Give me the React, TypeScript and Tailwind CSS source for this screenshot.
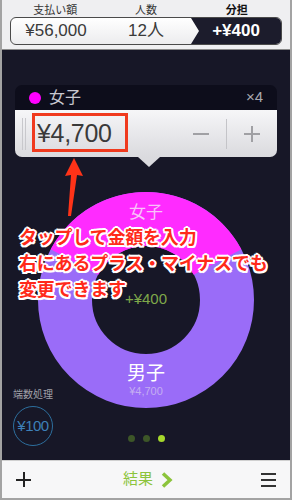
import React from "react";

const jp = { fontFamily: '"Liberation Sans", "Noto Sans CJK JP", sans-serif' };

export default function App() {
  return (
    <div
      className="relative w-[292px] h-[500px] flex flex-col overflow-hidden border-x-2 border-b-2 border-[#a3a3a3] bg-[#171727]"
      style={jp}
    >
      {/* header */}
      <div className="h-[50px] bg-[#efeff1] px-[8px] pt-[3px] border-b border-[#8a8a8a] flex flex-col">
        <div className="grid grid-cols-3 h-[14px] text-[11px] leading-[14px] text-[#333]">
          <div className="text-center">支払い額</div>
          <div className="text-center">人数</div>
          <div className="text-center font-bold text-[#111]">分担</div>
        </div>
        <div className="mt-[0px] h-[28px] rounded-[6px] border border-[#4a4a4a] bg-gradient-to-b from-[#ffffff] to-[#ececee] grid grid-cols-3 overflow-hidden text-[17px] leading-[26px] text-[#3a3a3a]">
          <div className="text-center">¥56,000</div>
          <div className="text-center">12人</div>
          <div className="text-center bg-[#1c1c2c] text-white font-bold [clip-path:polygon(0_0,100%_0,100%_100%,0_100%,8px_50%)]">
            +¥400
          </div>
        </div>
      </div>

      {/* dark content */}
      <div className="relative flex-1 flex flex-col">
        {/* popup */}
        <div className="relative mx-[13px] mt-[35px]">
          <div className="h-[25px] rounded-t-[7px] bg-[#0d0d1b] flex items-center px-[14px]">
            <div className="w-[12px] h-[12px] rounded-full bg-[#ff00ff]" />
            <div className="ml-[8px] text-[16px] text-[#c8c8d0]">女子</div>
            <div className="ml-auto text-[15px] text-[#a8a8b0]">×4</div>
          </div>
          <div className="relative h-[47px] rounded-b-[7px] bg-gradient-to-b from-[#f6f6f8] to-[#dadade] flex items-center">
            <div className="ml-[7px] w-[4px] h-[32px] border-x border-[#c8c8cc]" />
            <div className="ml-[11px] text-[25px] text-[#3a3a3a] tracking-[-0.3px]">¥4,700</div>
            <div className="ml-auto flex items-center text-[#9a9a9e]">
              <div className="w-[16px] h-[2px] bg-[#a0a0a4]" />
              <div className="ml-[17px] w-px h-[30px] bg-[#c4c4c8]" />
              <div className="ml-[17px] mr-[17px] relative w-[16px] h-[16px]">
                <div className="absolute left-0 top-[7px] w-[16px] h-[2px] bg-[#a0a0a4]" />
                <div className="absolute top-0 left-[7px] w-[2px] h-[16px] bg-[#a0a0a4]" />
              </div>
            </div>
            {/* red annotation box */}
            <div className="absolute left-[17px] top-[3px] w-[96px] h-[39px] border-[3px] border-[#f03a1e]" />
          </div>
          {/* pointer */}
          <div className="absolute left-[123px] -bottom-[10px] w-0 h-0 border-x-[11px] border-x-transparent border-t-[10px] border-t-[#dadade]" />
        </div>

        {/* donut chart */}
        <div className="relative mt-[35px] h-[216px] flex justify-center">
          <svg width="216" height="216" viewBox="0 0 216 216">
            <circle cx="108" cy="108" r="81" fill="none" stroke="#9a6cf8" strokeWidth="54" />
            <path
              d="M12.64 57.30 A108 108 0 0 1 203.36 57.30 L155.68 82.65 A54 54 0 0 0 60.32 82.65 Z"
              fill="#ff2bff"
            />
          </svg>
          <div className="absolute left-0 right-0 top-[11px] text-center text-[17px] leading-[20px] text-[#f9c2f9]">女子</div>
          <div className="absolute left-0 right-0 top-[98px] text-center text-[15px] leading-[18px] text-[#7fa84a]">+¥400</div>
          <div className="absolute left-0 right-0 top-[171px] text-center text-[19px] leading-[22px] text-white">男子</div>
          <div className="absolute left-0 right-0 top-[193px] text-center text-[11px] leading-[13px] text-[#c4aef2]">¥4,700</div>
        </div>

        {/* rounding control */}
        <div className="absolute left-[11px] top-[339px] flex flex-col items-center">
          <div className="text-[10px] leading-[12px] text-[#a0a0a8]">端数処理</div>
          <div className="mt-[5px] w-[40px] h-[40px] rounded-full border border-[#2d6f9e] flex items-center justify-center text-[15px] text-[#3d80b8] tracking-[-0.5px]">
            ¥100
          </div>
        </div>

        {/* page dots */}
        <div className="mt-auto mb-[18px] flex justify-center gap-[8px]">
          <div className="w-[7px] h-[7px] rounded-full bg-[#3d5628]" />
          <div className="w-[7px] h-[7px] rounded-full bg-[#3d5628]" />
          <div className="w-[7px] h-[7px] rounded-full bg-[#a6d82c]" />
        </div>
      </div>

      {/* bottom bar */}
      <div className="h-[38px] bg-[#f7f7f8] border-t border-[#d0d0d0] flex items-center px-[14px]">
        <div className="relative w-[15px] h-[15px]">
          <div className="absolute left-0 top-[7px] w-[15px] h-[1.5px] bg-[#222]" />
          <div className="absolute top-0 left-[7px] w-[1.5px] h-[15px] bg-[#222]" />
        </div>
        <div className="flex-1 flex items-center justify-center gap-[8px] pl-[4px]">
          <span className="text-[15px] text-[#8cc43c]">結果</span>
          <svg width="12" height="16" viewBox="0 0 12 16">
            <path d="M2 1.5 L9 8 L2 14.5" fill="none" stroke="#8cc43c" strokeWidth="3.5" strokeLinejoin="miter" />
          </svg>
        </div>
        <div className="w-[15px] flex flex-col gap-[4px]">
          <div className="h-[2px] bg-[#333]" />
          <div className="h-[2px] bg-[#333]" />
          <div className="h-[2px] bg-[#333]" />
        </div>
      </div>

      {/* annotation arrow */}
      <svg className="absolute left-[58px] top-[156px]" width="30" height="64" viewBox="0 0 30 64">
        <path d="M14 2 L23 20 L17 19 L11 60 L8 60 L11 19 L5 20 Z" fill="#ff3318" />
      </svg>

      {/* annotation text */}
      <div
        className="absolute left-[17px] top-[223px] text-[18px] leading-[26px] font-bold text-[#ff2a1a] whitespace-nowrap tracking-[-0.2px] [text-shadow:2px_0_0_#fff,-2px_0_0_#fff,0_2px_0_#fff,0_-2px_0_#fff,1.5px_1.5px_0_#fff,-1.5px_-1.5px_0_#fff,1.5px_-1.5px_0_#fff,-1.5px_1.5px_0_#fff]"
        style={{ fontFamily: '"Noto Sans CJK JP", sans-serif' }}
      >
        <div>タップして金額を入力</div>
        <div>右にあるプラス・マイナスでも</div>
        <div>変更できます</div>
      </div>
    </div>
  );
}
